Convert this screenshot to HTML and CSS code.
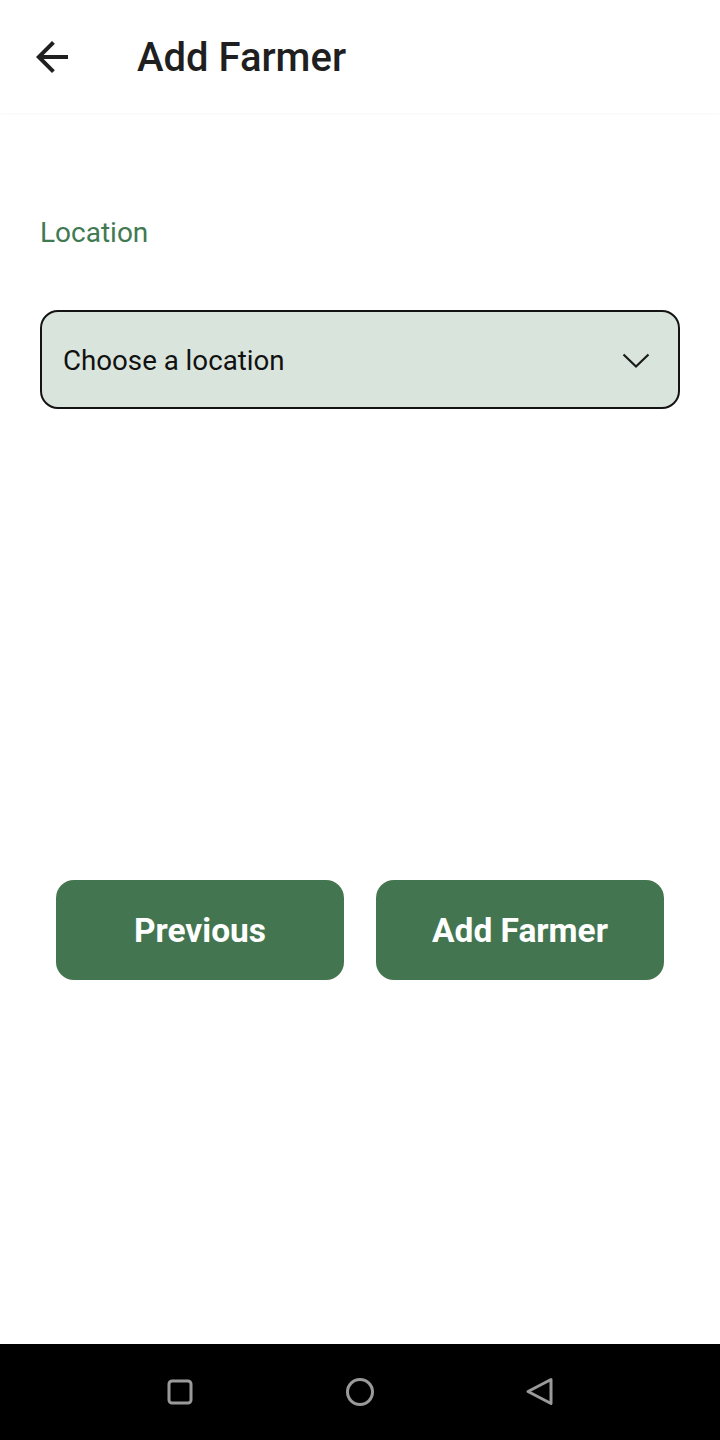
FILE: index.html
```html
<!DOCTYPE html>
<html>
<head>
<meta charset="utf-8">
<link rel="stylesheet" href="styles.css">
</head>
<body>
<div class="screen">
  <header class="appbar">
    <svg class="back" width="48" height="48" viewBox="0 0 24 24"><path d="M20 11H7.83l5.59-5.59L12 4l-8 8 8 8 1.41-1.41L7.83 13H20v-2z" fill="#1f1f1f"/></svg>
    <h1 class="title">Add Farmer</h1>
  </header>
  <main class="content">
    <div class="label">Location</div>
    <div class="select">
      <span class="select-text">Choose a location</span>
      <svg class="chev" width="28" height="16" viewBox="0 0 28 16"><path d="M1.5 1.5L14 13.5L26.5 1.5" fill="none" stroke="#1a1a1a" stroke-width="2.2"/></svg>
    </div>
    <div class="actions">
      <button class="btn">Previous</button>
      <button class="btn">Add Farmer</button>
    </div>
  </main>
  <nav class="navbar">
    <span class="nav-slot"><svg width="26" height="26" viewBox="0 0 26 26"><rect x="2" y="2" width="22" height="22" rx="3" fill="none" stroke="#9a9a9a" stroke-width="3"/></svg></span>
    <span class="nav-slot"><svg width="30" height="30" viewBox="0 0 30 30"><circle cx="15" cy="15" r="12.5" fill="none" stroke="#9a9a9a" stroke-width="3"/></svg></span>
    <span class="nav-slot"><svg width="30" height="30" viewBox="0 0 30 30"><path d="M26 2.5L3 14.5L26 26.5Z" fill="none" stroke="#9a9a9a" stroke-width="3" stroke-linejoin="round"/></svg></span>
  </nav>
</div>
</body>
</html>
```
FILE: styles.css
```css
* { box-sizing: border-box; }
html, body { margin: 0; padding: 0; }
body { font-family: Roboto, "Liberation Sans", sans-serif; background: #fff; }
.screen { width: 720px; height: 1440px; display: flex; flex-direction: column; background: #fff; }
.appbar {
  height: 113px; flex: none; display: flex; align-items: center;
  background: #fff; padding-left: 28px;
  box-shadow: 0 1px 3px rgba(0,0,0,0.03);
  position: relative; z-index: 1;
}
.back { display: block; }
.title { margin: 2px 0 0 61px; font-size: 40px; font-weight: 500; color: #1f1f1f; }
.content { flex: 1; padding: 0 40px; display: flex; flex-direction: column; }
.label { margin-top: 102px; font-size: 28px; color: #3f7a52; line-height: 36px; }
.select {
  margin-top: 59px; height: 99px; border: 2px solid #141414; border-radius: 18px;
  background: #d9e5dc; display: flex; align-items: center; justify-content: space-between;
  padding: 2px 28px 0 21px;
}
.select-text { font-size: 27.7px; color: #111; }
.chev { display: block; }
.actions { margin-top: 471px; display: flex; gap: 32px; padding: 0 16px; }
.btn {
  flex: 1; height: 100px; border: none; border-radius: 18px; background: #437650;
  color: #fff; font-family: Roboto, "Liberation Sans", sans-serif; font-weight: 700; font-size: 33.5px;
  padding: 0;
}
.navbar {
  height: 96px; flex: none; background: #000; display: flex; align-items: center;
  justify-content: center; gap: 120px;
}
.nav-slot { width: 60px; display: flex; justify-content: center; }
.navbar svg { display: block; }
```
